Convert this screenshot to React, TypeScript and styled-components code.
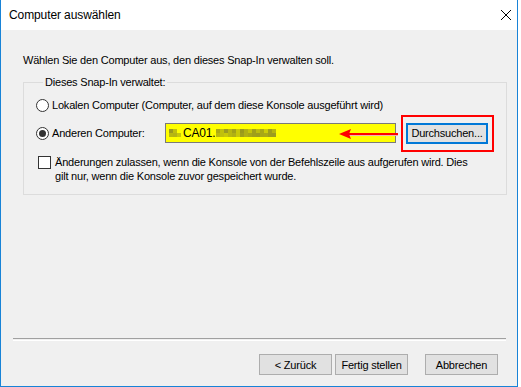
import React from "react"
import styled, { createGlobalStyle } from "styled-components"

const GlobalStyle = createGlobalStyle`
  html, body {
    margin: 0;
    padding: 0;
    background: #ffffff;
  }
  body {
    font-family: "Liberation Sans", Arial, sans-serif;
    font-size: 11px;
    letter-spacing: -0.2px;
    color: #000;
  }
`

const Window = styled.div`
  width: 518px;
  height: 387px;
  box-sizing: border-box;
  border: 1px solid #1883d7;
  border-top: none;
  display: flex;
  flex-direction: column;
  background: #f0f0f0;
`

const TitleBar = styled.div`
  height: 30px;
  flex: none;
  background: #fff;
  display: flex;
  align-items: center;
  justify-content: space-between;
  padding: 0 5px 0 8px;
`

const Title = styled.span`
  font-size: 12px;
  letter-spacing: -0.1px;
  color: #000;
`

const Body = styled.div`
  flex: 1;
  display: flex;
  flex-direction: column;
  padding: 23px 19px 0 22px;
`

const Intro = styled.p`
  margin: 0;
  line-height: 15px;
`

const Group = styled.fieldset`
  margin: 7px 0 0 0;
  padding: 5px 12px 11px 12px;
  border: 1px solid #dcdcdc;
  display: flex;
  flex-direction: column;
`

const Legend = styled.legend`
  margin-left: 7px;
  padding: 0 2px;
  line-height: 15px;
`

const Row = styled.label<{ $top: number; $align?: string }>`
  position: relative;
  display: flex;
  align-items: ${(p) => p.$align ?? "center"};
  margin-top: ${(p) => p.$top}px;
  line-height: 15px;
  white-space: nowrap;
`

const Radio = styled.span<{ $checked?: boolean }>`
  width: 13px;
  height: 13px;
  box-sizing: border-box;
  border: 1px solid #333;
  border-radius: 50%;
  background: #fff;
  margin-right: 3px;
  display: flex;
  align-items: center;
  justify-content: center;
  flex: none;

  &::after {
    content: "";
    width: 7px;
    height: 7px;
    border-radius: 50%;
    background: ${(p) => (p.$checked ? "#333" : "transparent")};
  }
`

const Check = styled.span`
  width: 13px;
  height: 13px;
  box-sizing: border-box;
  border: 1px solid #333;
  background: #fff;
  margin: 1px 4px 0 2px;
  flex: none;
`

const FieldLabel = styled.span`
  width: 113px;
  flex: none;
`

const NameField = styled.div`
  width: 231px;
  height: 20px;
  box-sizing: border-box;
  border: 1px solid #7a7a7a;
  background: #ffff00;
  display: flex;
  align-items: center;
  padding-left: 3px;
`

const NameText = styled.span`
  margin: 0 1px 0 2px;
  font-size: 12px;
`

const Highlight = styled.span`
  margin: -9px 0 -9px 5px;
  padding: 6px 4px 6px 3px;
  border: 2px solid #ff0000;
  display: flex;
`

const Button = styled.button<{ $focused?: boolean; $width?: number }>`
  width: ${(p) => p.$width ?? 73}px;
  height: 21px;
  box-sizing: border-box;
  border: ${(p) => (p.$focused ? "2px solid #0078d7" : "1px solid #adadad")};
  background: #e1e1e1;
  font-family: "Liberation Sans", Arial, sans-serif;
  font-size: 11px;
  letter-spacing: -0.2px;
  color: #000;
  padding: 0;
  display: flex;
  align-items: center;
  justify-content: center;
`

const Arrow = styled.svg`
  position: absolute;
  left: 301px;
  top: 4px;
`

const Wrap = styled.span`
  line-height: 14px;
`

const Separator = styled.div`
  margin: auto -8px 0 -10px;
  height: 1px;
  border-top: 1px solid #a0a0a0;
  border-bottom: 1px solid #fff;
`

const Footer = styled.div`
  display: flex;
  justify-content: flex-end;
  gap: 3px;
  padding: 13px 0 11px;
`

const Gap = styled.span`
  width: 11px;
`

const head = ["#9a9a1e", "#b4b414", "#ffff00"]

const tail = ["#aaaa14", "#c0c00c", "#9c9c20", "#b8b810", "#a2a218", "#c8c808", "#9a9a1c", "#b0b014", "#c4c40a", "#a0a01a", "#bcbc0e", "#a8a816", "#cccc08", "#9e9e1c", "#b6b610"]

function Mosaic({ cells, rows }: { cells: string[]; rows: number }) {
  return (
    <svg width={cells.length * 4} height={rows * 4} style={{ display: "block" }}>
      {cells.map((c, i) =>
        Array.from({ length: rows }).map((_, r) => (
          <rect
            key={`${i}-${r}`}
            x={i * 4}
            y={r * 4}
            width={4}
            height={4}
            fill={(i + r) % 2 === 0 ? c : tail[(i + r * 3) % tail.length]}
          />
        ))
      )}
    </svg>
  )
}

export default function App() {
  return (
    <>
      <GlobalStyle />
      <Window>
        <TitleBar>
          <Title>Computer auswählen</Title>
          <svg width="12" height="12" viewBox="0 0 12 12">
            <path d="M1 1 L11 11 M11 1 L1 11" stroke="#000" strokeWidth="1" />
          </svg>
        </TitleBar>
        <Body>
          <Intro>Wählen Sie den Computer aus, den dieses Snap-In verwalten soll.</Intro>
          <Group>
            <Legend>Dieses Snap-In verwaltet:</Legend>
            <Row $top={3}>
              <Radio />
              Lokalen Computer (Computer, auf dem diese Konsole ausgeführt wird)
            </Row>
            <Row $top={10}>
              <Radio $checked />
              <FieldLabel>Anderen Computer:</FieldLabel>
              <NameField>
                <Mosaic cells={head} rows={2} />
                <NameText>CA01.</NameText>
                <Mosaic cells={tail} rows={2} />
              </NameField>
              <Highlight>
                <Button $focused $width={82}>Durchsuchen...</Button>
              </Highlight>
              <Arrow width="62" height="14" viewBox="0 0 62 14">
                <path d="M12 8 L61 8" stroke="#f2b3b3" strokeWidth="2" />
                <path d="M8 7 L61 7" stroke="#ff0000" strokeWidth="2" />
                <path d="M2 7 L14 2 L12 7 L14 12 Z" fill="#ff0000" />
              </Arrow>
            </Row>
            <Row $top={12} $align="flex-start">
              <Check />
              <Wrap>
                Änderungen zulassen, wenn die Konsole von der Befehlszeile aus aufgerufen wird. Dies
                <br />
                gilt nur, wenn die Konsole zuvor gespeichert wurde.
              </Wrap>
            </Row>
          </Group>
          <Separator />
          <Footer>
            <Button>&lt; Zurück</Button>
            <Button>Fertig stellen</Button>
            <Gap />
            <Button>Abbrechen</Button>
          </Footer>
        </Body>
      </Window>
    </>
  )
}
